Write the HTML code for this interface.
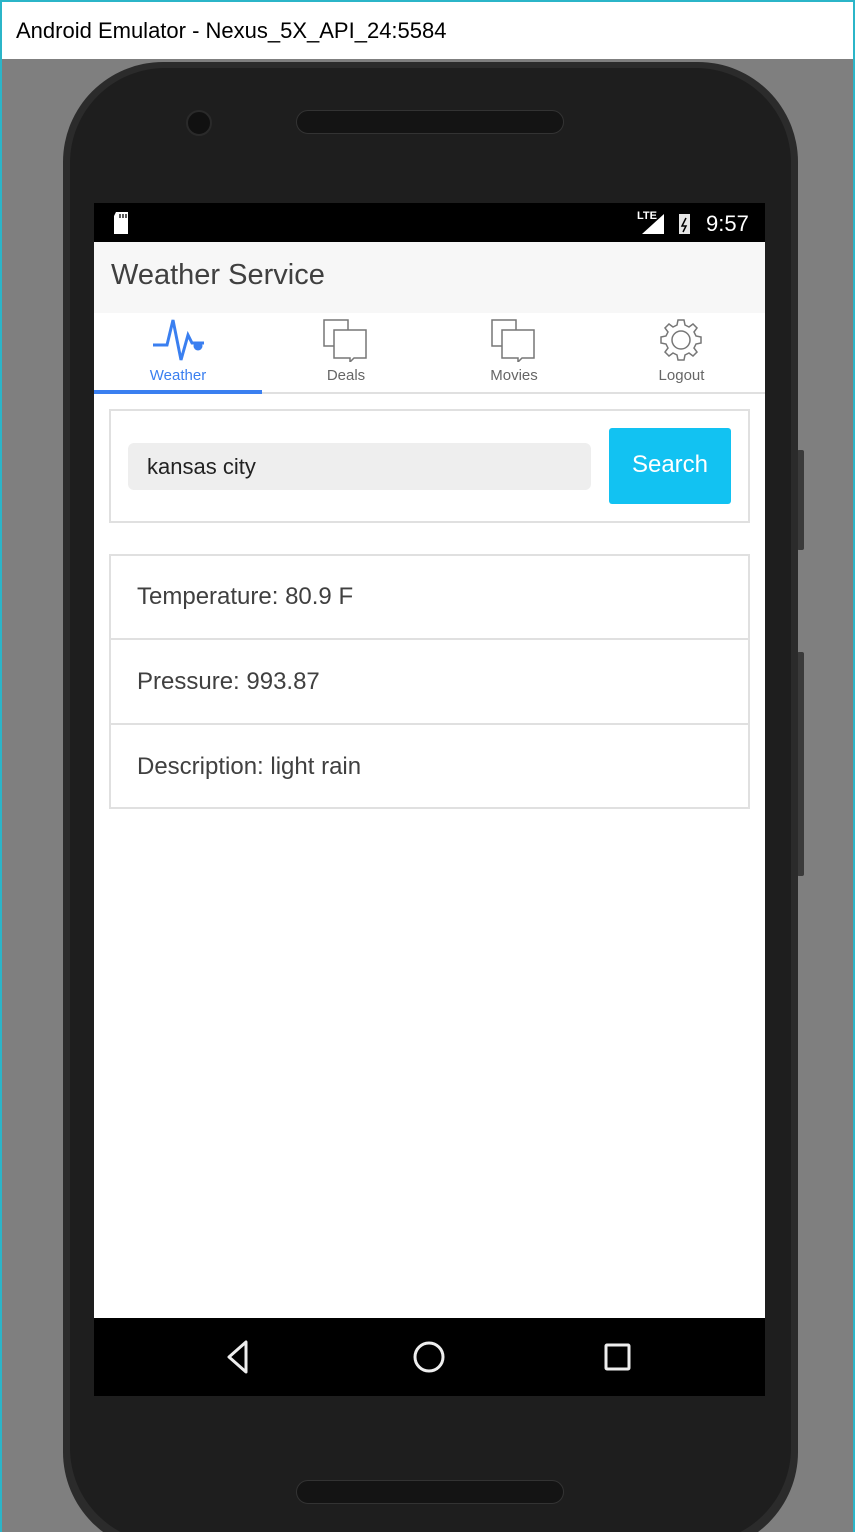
<!DOCTYPE html>
<html style="width:855px;height:1532px;overflow:hidden"><head><style>
*{margin:0;padding:0;box-sizing:border-box}
body{width:855px;height:1532px;background:#7f7f7f;position:relative;overflow:hidden;font-family:"Liberation Sans",sans-serif}
.abs{position:absolute}
</style></head><body>
<div class="abs" style="left:0;top:0;width:855px;height:1532px;border:2px solid #2bb5c8;border-bottom:none"></div>
<div class="abs" style="left:2px;top:2px;width:851px;height:57px;background:#fff"></div>
<div class="abs" style="left:16px;top:18px;font-size:22px;color:#000">Android Emulator - Nexus_5X_API_24:5584</div>
<div class="abs" style="left:797px;top:450px;width:7px;height:100px;background:#3a3a3a;border-radius:2px"></div>
<div class="abs" style="left:797px;top:652px;width:7px;height:224px;background:#3a3a3a;border-radius:2px"></div>
<div class="abs" style="left:63px;top:62px;width:735px;height:1490px;background:#2b2b2b;border-radius:100px"></div>
<div class="abs" style="left:70px;top:68px;width:721px;height:1475px;background:#1e1e1e;border-radius:95px"></div>
<div class="abs" style="left:186px;top:110px;width:26px;height:26px;border-radius:50%;background:#111;border:2px solid #2a2a2a"></div>
<div class="abs" style="left:296px;top:110px;width:268px;height:24px;border-radius:12px;background:#141414;border:1px solid #333"></div>
<div class="abs" style="left:296px;top:1480px;width:268px;height:24px;border-radius:12px;background:#141414;border:1px solid #333"></div>
<!-- screen -->
<div class="abs" style="left:94px;top:203px;width:671px;height:39px;background:#000"></div>
<svg class="abs" style="left:112px;top:210px" width="22" height="26"><path d="M4 2h12v22H2V6z" fill="#fff"/><path d="M8 4v4M11 4v4M14 4v4" stroke="#000" stroke-width="1.3"/></svg>
<div class="abs" style="left:637px;top:210px;color:#fff;font-size:11px;font-weight:bold">LTE</div>
<svg class="abs" style="left:640px;top:212px" width="50" height="24"><path d="M2 22L24 2v20z" fill="#fff"/><rect x="39" y="2" width="11" height="20" fill="#fff" opacity=".9"/><path d="M46 6l-4 8h4l-3 6" stroke="#000" stroke-width="1.5" fill="none"/></svg>
<div class="abs" style="left:706px;top:211px;color:#fff;font-size:22px">9:57</div>
<div class="abs" style="left:94px;top:242px;width:671px;height:71px;background:#f7f7f7"></div>
<div class="abs" style="left:111px;top:259px;font-size:29px;color:#404040">Weather Service</div>
<div class="abs" style="left:94px;top:313px;width:671px;height:82px;background:#fff"></div>
<div class="abs" style="left:94px;top:392px;width:671px;height:2px;background:#e0e0e0"></div>
<div class="abs" style="left:94px;top:390px;width:168px;height:4px;background:#3a7ff0"></div>
<svg class="abs" style="left:150px;top:318px" width="56" height="44"><path d="M3 27h14l6-25 8 40 7-25 4 8h12" stroke="#3a7ff0" stroke-width="3" fill="none"/><circle cx="48" cy="28" r="4.5" fill="#3a7ff0"/></svg>
<svg class="abs" style="left:322px;top:318px" width="48" height="44"><path d="M2 2h24v26H2z" fill="#fff" stroke="#777" stroke-width="1.5"/><path d="M12 12h32v28H32l-4 4v-4H12z" fill="#fff" stroke="#777" stroke-width="1.5"/></svg>
<svg class="abs" style="left:490px;top:318px" width="48" height="44"><path d="M2 2h24v26H2z" fill="#fff" stroke="#777" stroke-width="1.5"/><path d="M12 12h32v28H32l-4 4v-4H12z" fill="#fff" stroke="#777" stroke-width="1.5"/></svg>
<svg class="abs" style="left:659px;top:318px" width="44" height="44" viewBox="0 0 44 44"><circle cx="22" cy="22" r="9" fill="none" stroke="#777" stroke-width="1.5"/><path d="M19 2h6l1 5 4 2 4-3 4 4-3 4 2 4 5 1v6l-5 1-2 4 3 4-4 4-4-3-4 2-1 5h-6l-1-5-4-2-4 3-4-4 3-4-2-4-5-1v-6l5-1 2-4-3-4 4-4 4 3 4-2z" fill="none" stroke="#777" stroke-width="1.5"/></svg>
<div class="abs" style="left:94px;top:367px;width:168px;text-align:center;font-size:15px;color:#3a7ff0">Weather</div>
<div class="abs" style="left:262px;top:367px;width:168px;text-align:center;font-size:15px;color:#666">Deals</div>
<div class="abs" style="left:430px;top:367px;width:168px;text-align:center;font-size:15px;color:#666">Movies</div>
<div class="abs" style="left:598px;top:367px;width:167px;text-align:center;font-size:15px;color:#666">Logout</div>
<div class="abs" style="left:94px;top:394px;width:671px;height:924px;background:#fff"></div>
<div class="abs" style="left:109px;top:409px;width:641px;height:114px;border:2px solid #e0e0e0"></div>
<div class="abs" style="left:128px;top:443px;width:463px;height:47px;background:#eee;border-radius:6px"></div>
<div class="abs" style="left:147px;top:454px;font-size:22px;color:#222">kansas city</div>
<div class="abs" style="left:609px;top:428px;width:122px;height:76px;background:#12c2f2;border-radius:3px;color:#fff;font-size:24px;text-align:center;line-height:74px">Search</div>
<div class="abs" style="left:109px;top:554px;width:641px;height:255px;border:2px solid #e0e0e0"></div>
<div class="abs" style="left:109px;top:638px;width:641px;height:2px;background:#e0e0e0"></div>
<div class="abs" style="left:109px;top:723px;width:641px;height:2px;background:#e0e0e0"></div>
<div class="abs" style="left:137px;top:583px;font-size:24px;color:#404040">Temperature: 80.9 F</div>
<div class="abs" style="left:137px;top:668px;font-size:24px;color:#404040">Pressure: 993.87</div>
<div class="abs" style="left:137px;top:753px;font-size:24px;color:#404040">Description: light rain</div>
<div class="abs" style="left:94px;top:1318px;width:671px;height:78px;background:#000"></div>
<svg class="abs" style="left:94px;top:1318px" width="671" height="78"><path d="M135 39l17-15v30z" fill="none" stroke="#eee" stroke-width="3" stroke-linejoin="round"/><circle cx="335" cy="39" r="14" fill="none" stroke="#eee" stroke-width="3"/><rect x="512" y="27" width="23" height="24" rx="1" fill="none" stroke="#eee" stroke-width="3"/></svg>
</body></html>
